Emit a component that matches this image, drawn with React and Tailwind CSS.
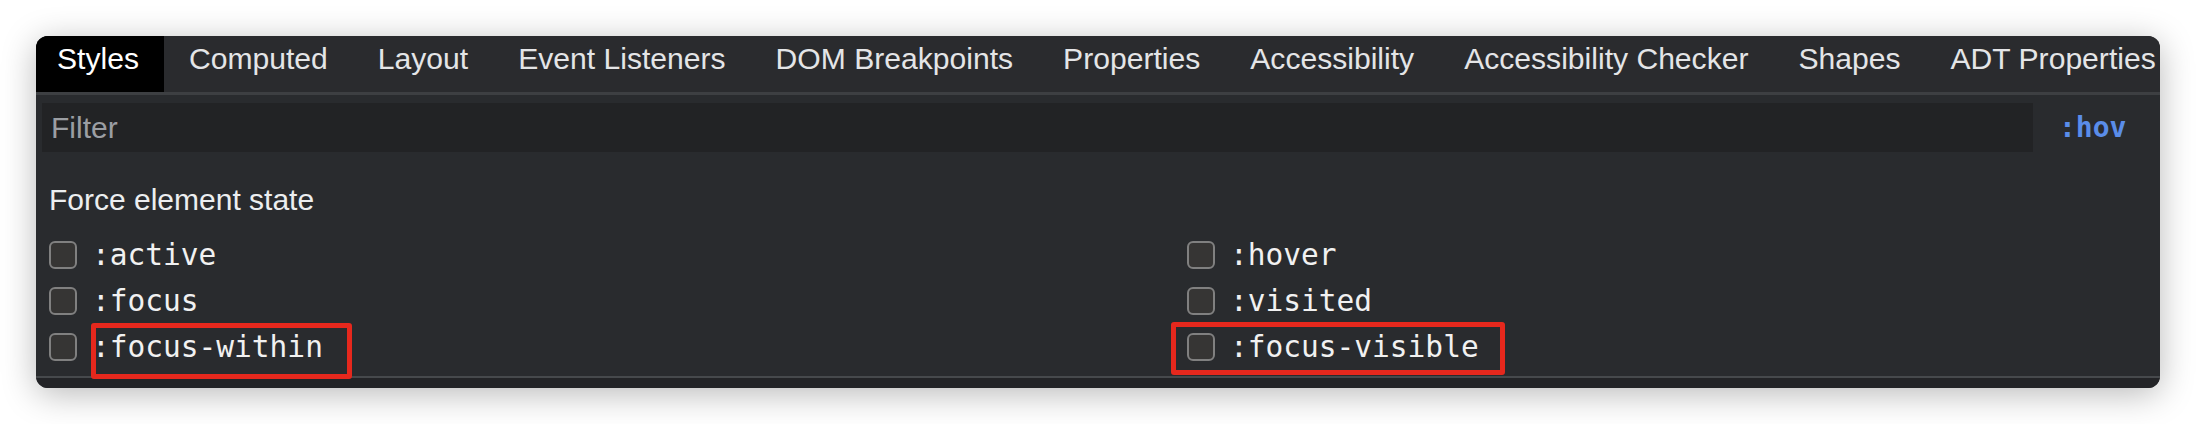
const tabs = [
  "Computed",
  "Layout",
  "Event Listeners",
  "DOM Breakpoints",
  "Properties",
  "Accessibility",
  "Accessibility Checker",
  "Shapes",
  "ADT Properties",
];

function StateCheck({ label }) {
  return (
    <div className="flex items-center h-[46px]">
      <span className="w-[28px] h-[28px] rounded-[6px] border-2 border-[#808080] bg-[#363534] shrink-0" />
      <span className="ml-[15px] font-['DejaVu_Sans_Mono',monospace] text-[29.5px] leading-[34px] text-[#f1f1f1]">
        {label}
      </span>
    </div>
  );
}

export default function App() {
  return (
    <div className="w-[2196px] h-[424px] bg-white pt-[36px] pl-[36px] font-['Liberation_Sans',Arial,sans-serif]">
      <div className="relative w-[2124px] h-[352px] rounded-[12px] overflow-hidden bg-[#292b2e] shadow-[0_6px_34px_rgba(0,0,0,0.28)] flex flex-col">
        {/* tab strip */}
        <div className="h-[56px] flex bg-[#2a2b2e] whitespace-nowrap shrink-0">
          <div className="bg-black pl-[21px] pr-[25px] pt-[6px] text-[30.1px] leading-[34px] text-white">
            Styles
          </div>
          {tabs.map((t) => (
            <div
              key={t}
              className="px-[25px] pt-[6px] text-[30.1px] leading-[34px] text-[#e4e5e7]"
            >
              {t}
            </div>
          ))}
        </div>
        <div className="h-[3px] bg-[#3d3f42] shrink-0" />

        {/* filter */}
        <div className="flex items-center pt-[8px] shrink-0">
          <div className="ml-[6px] w-[1991px] h-[49px] bg-[#222325] flex items-center pl-[9px] text-[30px] leading-[34px] text-[#9b9ea3]">
            Filter
          </div>
          <span className="ml-[26px] font-['DejaVu_Sans_Mono',monospace] font-bold text-[28px] leading-[34px] text-[#5a8de9]">
            :hov
          </span>
        </div>

        {/* force element state */}
        <div className="mt-[31px] pl-[13px] text-[30px] leading-[34px] text-[#eceef0] shrink-0">
          Force element state
        </div>
        <div className="mt-[15px] pl-[13px] grid grid-cols-[1138px_1fr] shrink-0">
          <div className="flex flex-col">
            <StateCheck label=":active" />
            <StateCheck label=":focus" />
            <StateCheck label=":focus-within" />
          </div>
          <div className="flex flex-col">
            <StateCheck label=":hover" />
            <StateCheck label=":visited" />
            <StateCheck label=":focus-visible" />
          </div>
        </div>
        <div className="mt-[6px] h-[2px] bg-[#46494c] shrink-0" />
        <div className="flex-1 bg-[#232427]" />

        {/* annotation boxes */}
        <div className="absolute left-[55px] top-[287px] w-[261px] h-[56px] border-[5px] border-[#e6281d] rounded-[3px]" />
        <div className="absolute left-[1135px] top-[286px] w-[334px] h-[53px] border-[5px] border-[#e6281d] rounded-[3px]" />
      </div>
    </div>
  );
}
